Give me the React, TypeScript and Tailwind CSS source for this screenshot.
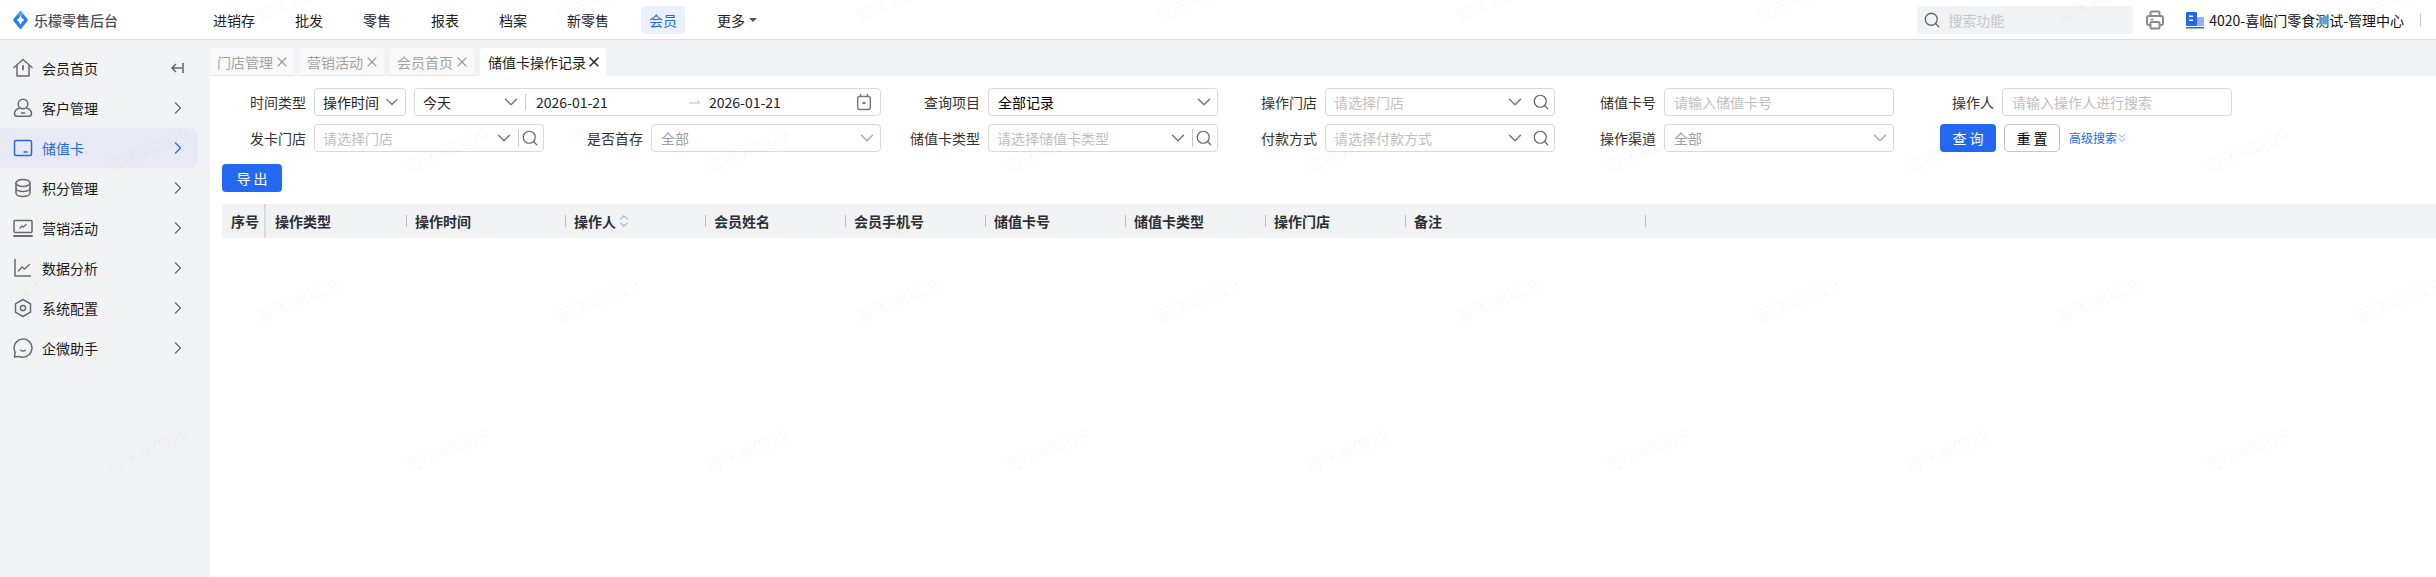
import { ChevronDown, ChevronRight, ChevronsDown, ChevronsUpDown, Search, X } from "lucide-react"
import type { ReactNode } from "react"

const FONT = "[font-family:'Noto_Sans_CJK_SC','Noto_Sans',sans-serif]"

const navItems = ["进销存", "批发", "零售", "报表", "档案", "新零售", "会员", "更多"]
const tabs = ["门店管理", "营销活动", "会员首页"]

const columns = [
  { title: "操作类型", width: 140 },
  { title: "操作时间", width: 159 },
  { title: "操作人", width: 140, sort: true },
  { title: "会员姓名", width: 140 },
  { title: "会员手机号", width: 140 },
  { title: "储值卡号", width: 140 },
  { title: "储值卡类型", width: 140 },
  { title: "操作门店", width: 140 },
  { title: "备注", width: 240 },
]

function Icon({ children }: { children: ReactNode }) {
  return (
    <svg viewBox="0 0 20 20" className="h-5 w-5 shrink-0" fill="none" stroke="currentColor" strokeWidth="1.5" strokeLinecap="round" strokeLinejoin="round">
      {children}
    </svg>
  )
}

const menu: { label: string; icon: ReactNode; active?: boolean; collapse?: boolean }[] = [
  {
    label: "会员首页",
    collapse: true,
    icon: (
      <Icon>
        <path d="M1 9.500 10 1.500l9 8" />
        <path d="M4 7.500V18h12V7.500" />
        <path d="M10 8v3.500" strokeWidth="1.800" />
      </Icon>
    ),
  },
  {
    label: "客户管理",
    icon: (
      <Icon>
        <circle cx="10" cy="6" r="4.800" />
        <path d="M6.500 10C3.500 11 1.500 13 1.500 15.500c0 1.800 1 2.800 2.800 2.800h11.400c1.800 0 2.800-1 2.800-2.800 0-2.500-2-4.500-5-5.500" />
        <path d="M8.500 15h3" />
      </Icon>
    ),
  },
  {
    label: "储值卡",
    active: true,
    icon: (
      <Icon>
        <rect x="1.500" y="2.500" width="17" height="15" rx="1.500" />
        <path d="M11 14h3" />
      </Icon>
    ),
  },
  {
    label: "积分管理",
    icon: (
      <Icon>
        <ellipse cx="10" cy="5" rx="7" ry="3.500" />
        <path d="M3 5v10c0 2 3.100 3.500 7 3.500s7-1.500 7-3.500V5" />
        <path d="M3 10c0 2 3.100 3.500 7 3.500s7-1.500 7-3.500" />
      </Icon>
    ),
  },
  {
    label: "营销活动",
    icon: (
      <Icon>
        <rect x="1" y="2.500" width="18" height="12" rx="1" />
        <path d="M1 18h18" strokeWidth="1.800" />
        <path d="m7 10 2-2 1.500 1 2.500-2.500" strokeWidth="1.300" />
      </Icon>
    ),
  },
  {
    label: "数据分析",
    icon: (
      <Icon>
        <path d="M2 1.500V18h15.500" />
        <path d="m5.500 13 3.500-4 2.500 2 5-4.500" strokeWidth="1.300" />
      </Icon>
    ),
  },
  {
    label: "系统配置",
    icon: (
      <Icon>
        <path d="M10 1.500 17.500 5.800v8.400L10 18.500l-7.500-4.300V5.800z" />
        <circle cx="10" cy="10" r="2.600" />
      </Icon>
    ),
  },
  {
    label: "企微助手",
    icon: (
      <Icon>
        <path d="M10 1C5 1 1 5 1 10c0 1.600.4 3.100 1.100 4.400L1.500 19l4.300-.6C7 19 8.500 19.200 10 19.200c5 0 9-4 9-9.100S15 1 10 1z" />
        <path d="M7.800 12.300c1.200.700 3.200.700 4.400 0" />
      </Icon>
    ),
  },
]

function Logo() {
  return (
    <svg viewBox="0 0 16 20" className="h-5 w-[15px] shrink-0">
      <path d="M8 0 15.500 9q.5 1 0 2L8 20 .5 11q-.5-1 0-2z" fill="#2b7ff4" />
      <path d="M8 0 11.500 4.200Q9.500 5.500 8 8 6.500 5.500 4.500 4.200z" fill="#45a5fa" />
      <path d="M8 5.500Q9 8.500 12 10 9 11.500 8 15 7 11.500 4 10 7 8.500 8 5.500z" fill="#ffffff" />
    </svg>
  )
}

function Printer() {
  return (
    <svg viewBox="0 0 18 20" className="h-5 w-[18px]" fill="none" stroke="#8a8a8a" strokeWidth="2" strokeLinejoin="round">
      <path d="M4.500 6V2.500a1 1 0 0 1 1-1h7a1 1 0 0 1 1 1V6" />
      <rect x="1" y="6" width="16" height="9" rx="2" />
      <rect x="4.500" y="12" width="9" height="6.500" rx="1" fill="#ffffff" />
      <path d="M4.500 9.500h3" strokeWidth="1.500" />
    </svg>
  )
}

function Building() {
  return (
    <svg viewBox="0 0 18 18" className="h-[18px] w-[18px] shrink-0">
      <rect x="0" y="1" width="11" height="14" rx="1" fill="#2468f2" />
      <rect x="11" y="6" width="7" height="9" fill="#8fb2f8" />
      <rect x="0" y="16" width="18" height="1.500" fill="#2468f2" />
      <rect x="3" y="4.500" width="4" height="1.500" fill="#ffffff" />
      <rect x="3" y="8.500" width="4" height="1.500" fill="#ffffff" />
    </svg>
  )
}

function FieldBox({ className = "w-[230px]", children }: { className?: string; children: ReactNode }) {
  return (
    <div className={`flex h-7 shrink-0 items-center rounded border border-[#d9d9d9] bg-white ${className}`}>
      {children}
    </div>
  )
}

function Item({ label, className = "", children }: { label: string; className?: string; children: ReactNode }) {
  return (
    <div className={`flex items-center justify-end gap-2 ${className}`}>
      <span className="whitespace-nowrap text-[#333]">{label}</span>
      {children}
    </div>
  )
}

function SelectField({ value, muted }: { value: string; muted?: boolean }) {
  return (
    <FieldBox>
      <span className={`flex-1 pl-[9px] ${muted ? "text-[#a0a0a0]" : "text-black"}`}>{value}</span>
      <ChevronDown size={22} strokeWidth={1.6} className={`mr-[2px] shrink-0 ${muted ? "text-[#aaa]" : "text-[#777]"}`} />
    </FieldBox>
  )
}

function SearchField({ placeholder, divider }: { placeholder: string; divider?: boolean }) {
  return (
    <FieldBox>
      <span className="flex-1 pl-[8px] text-[#c0c0c0]">{placeholder}</span>
      <ChevronDown size={22} strokeWidth={1.6} className="shrink-0 text-[#777]" />
      <span className={`ml-[3px] h-[18px] w-px ${divider ? "bg-[#ccc]" : "bg-transparent"}`} />
      <Search size={18} strokeWidth={1.6} className="ml-[2px] mr-[4px] shrink-0 text-[#666]" />
    </FieldBox>
  )
}

function InputField({ placeholder }: { placeholder: string }) {
  return (
    <FieldBox>
      <span className="pl-[9px] text-[#c0c0c0]">{placeholder}</span>
    </FieldBox>
  )
}

function CalendarIcon() {
  return (
    <svg viewBox="0 0 14 18" className="mr-[9px] h-[18px] w-[14px]" fill="none" stroke="#777" strokeWidth="1.400">
      <rect x="0.700" y="3.500" width="12.600" height="13" rx="2" />
      <path d="M3.500 1v3M10.500 1v3" />
      <path d="M5.500 10h3" strokeWidth="2" />
    </svg>
  )
}

function Filters() {
  return (
    <div className="grid grid-cols-[322px_337px_337px_337px_339px_338px] gap-y-2 pt-3">
      <Item label="时间类型" className="col-span-2">
        <FieldBox className="w-[92px]">
          <span className="flex-1 pl-2 text-[#222]">操作时间</span>
          <ChevronDown size={20} strokeWidth={1.6} className="mr-[3px] shrink-0 text-[#777]" />
        </FieldBox>
        <FieldBox className="w-[467px]">
          <span className="flex w-[110px] items-center justify-between pl-2 pr-[3px] text-[#222]">
            今天
            <ChevronDown size={22} strokeWidth={1.6} className="shrink-0 text-[#777]" />
          </span>
          <span className="h-[16px] w-px bg-[#ccc]" />
          <span className="ml-[10px] w-[153px] text-[#222]">2026-01-21</span>
          <svg viewBox="0 0 12 8" className="mr-[8px] h-2 w-3" fill="none" stroke="#bbb" strokeWidth="1">
            <path d="M0 5h11L8 2" />
          </svg>
          <span className="flex-1 text-[#222]">2026-01-21</span>
          <CalendarIcon />
        </FieldBox>
      </Item>
      <Item label="查询项目">
        <SelectField value="全部记录" />
      </Item>
      <Item label="操作门店">
        <SearchField placeholder="请选择门店" />
      </Item>
      <Item label="储值卡号">
        <InputField placeholder="请输入储值卡号" />
      </Item>
      <Item label="操作人">
        <InputField placeholder="请输入操作人进行搜索" />
      </Item>

      <Item label="发卡门店">
        <SearchField placeholder="请选择门店" divider />
      </Item>
      <Item label="是否首存">
        <SelectField value="全部" muted />
      </Item>
      <Item label="储值卡类型">
        <SearchField placeholder="请选择储值卡类型" divider />
      </Item>
      <Item label="付款方式">
        <SearchField placeholder="请选择付款方式" />
      </Item>
      <Item label="操作渠道">
        <SelectField value="全部" muted />
      </Item>
      <div className="flex items-center gap-2 pl-[46px]">
        <button className="h-7 w-14 rounded bg-[#2468f2] text-white">查 询</button>
        <button className="h-7 w-14 rounded border border-[#c4c4c4] bg-white text-black">重 置</button>
        <span className="ml-[1px] flex items-center text-xs text-[#2468f2]">
          高级搜索
          <ChevronsDown size={14} strokeWidth={1.5} className="-ml-[2px] text-[#6a9af5]" />
        </span>
      </div>
    </div>
  )
}

function TableHead() {
  return (
    <div className="mt-3 flex h-[34px] items-center bg-[#f2f3f5] font-bold text-[#2b2f36]">
      <div className="flex h-full w-[44px] shrink-0 items-center border-r-2 border-[#d8dade] pl-[9px]">序号</div>
      {columns.map((col, i) => (
        <div key={col.title} className="flex h-3 shrink-0 items-center" style={{ width: col.width }}>
          {i > 0 && <span className="h-3 w-px bg-[#b8bcc4]" />}
          <span className={`whitespace-nowrap ${i > 0 ? "pl-2" : "pl-[9px]"}`}>{col.title}</span>
          {col.sort && <ChevronsUpDown size={16} strokeWidth={1.4} className="text-[#888]" />}
        </div>
      ))}
      <span className="h-3 w-px bg-[#b8bcc4]" />
    </div>
  )
}

function Watermarks() {
  const marks: { x: number; y: number }[] = []
  for (let row = 0; row < 3; row++) {
    for (let col = -1; col < 9; col++) {
      marks.push({ x: 147 + col * 300, y: 150 + row * 300 })
      marks.push({ x: 297 + col * 300, y: row * 300 })
    }
  }
  return (
    <div className="pointer-events-none absolute inset-0 z-10 overflow-hidden">
      {marks.map((m) => (
        <span
          key={`${m.x}-${m.y}`}
          className="absolute -translate-x-1/2 -translate-y-1/2 -rotate-[22deg] whitespace-nowrap text-[17px] font-light text-black/[0.055]"
          style={{ left: m.x, top: m.y }}
        >
          曾庆昶0829
        </span>
      ))}
    </div>
  )
}

export default function App() {
  return (
    <div className={`relative flex h-screen flex-col overflow-hidden bg-white text-sm ${FONT}`}>
      <header className="flex h-10 shrink-0 items-center border-b border-[#dcdcdc] bg-white">
        <div className="flex w-[205px] shrink-0 items-center gap-[6px] pl-[13px]">
          <Logo />
          <span className="font-medium text-[#4a4f57]">乐檬零售后台</span>
        </div>
        <nav className="flex items-center gap-6 text-[#222]">
          {navItems.map((item) => (
            <span
              key={item}
              className={`flex h-7 items-center rounded px-2 ${item === "会员" ? "bg-[#eaf0fd] text-[#2468f2]" : ""}`}
            >
              {item}
              {item === "更多" && <span className="ml-1 h-0 w-0 border-x-[4px] border-t-[4px] border-x-transparent border-t-[#555]" />}
            </span>
          ))}
        </nav>
        <div className="ml-auto flex items-center pr-[15px]">
          <div className="flex h-7 w-[216px] items-center gap-[7px] rounded bg-[#f2f3f5] pl-[6px]">
            <Search size={18} strokeWidth={1.7} className="text-[#666]" />
            <span className="text-[#c4c6ca]">搜索功能</span>
          </div>
          <span className="ml-[13px]">
            <Printer />
          </span>
          <span className="ml-[22px]">
            <Building />
          </span>
          <span className="ml-[5px] whitespace-nowrap text-[#111]">4020-喜临门零食测试-管理中心</span>
          <span className="ml-[16px] h-[14px] w-px bg-[#ccc]" />
        </div>
      </header>

      <div className="flex min-h-0 flex-1">
        <aside className="w-[210px] shrink-0 bg-[#f2f3f5] pt-2">
          {menu.map((item) => (
            <div
              key={item.label}
              className={`flex h-10 w-[198px] items-center gap-[9px] rounded-r-lg pl-[13px] pr-[12px] ${
                item.active ? "bg-[#e7eaf4] text-[#2468f2]" : "text-[#1a1a1a]"
              }`}
            >
              <span className={item.active ? "text-[#2468f2]" : "text-[#666a75]"}>{item.icon}</span>
              <span className="flex-1">{item.label}</span>
              {item.collapse ? (
                <svg viewBox="0 0 14 12" className="mr-[2px] h-3 w-[14px]" fill="none" stroke="#666a75" strokeWidth="1.600">
                  <path d="M13 1v10M12 6H2M6 2 2 6l4 4" />
                </svg>
              ) : (
                <ChevronRight size={20} strokeWidth={1.5} className={item.active ? "-mr-[2px] text-[#2468f2]" : "-mr-[2px] text-[#666a75]"} />
              )}
            </div>
          ))}
        </aside>

        <main className="min-w-0 flex-1">
          <div className="flex h-9 items-end gap-[6px] bg-[#f2f3f5]">
            {tabs.map((tab) => (
              <div key={tab} className="flex h-7 w-[84px] items-center rounded-t border-b border-[#e4e4e4] bg-[#f9f9f9] pl-[7px] text-[#a3a3a3]">
                {tab}
                <X size={16} strokeWidth={1.6} className="ml-[1px] text-[#999]" />
              </div>
            ))}
            <div className="flex h-7 w-[126px] items-center rounded-t bg-white pl-2 text-[#222]">
              储值卡操作记录
              <X size={16} strokeWidth={2.2} className="text-[#222]" />
            </div>
          </div>

          <div className="pl-3">
            <Filters />
            <button className="mt-3 h-7 w-[60px] rounded bg-[#2468f2] text-white">导 出</button>
            <TableHead />
          </div>
        </main>
      </div>

      <Watermarks />
    </div>
  )
}
